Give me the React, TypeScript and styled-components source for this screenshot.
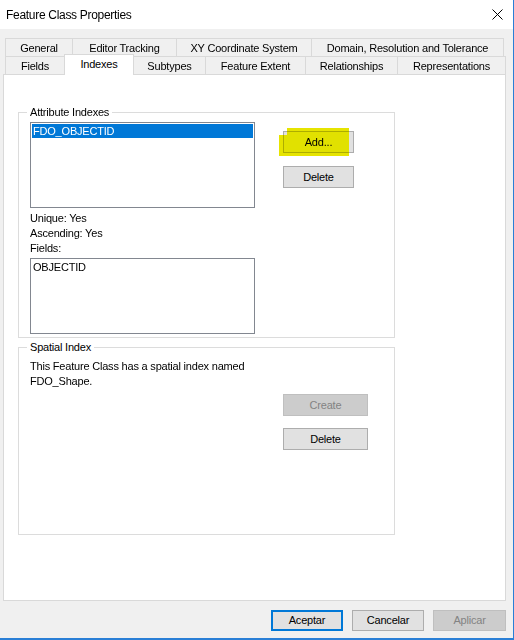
import React from "react";
import styled, { createGlobalStyle } from "styled-components";

const Global = createGlobalStyle`
  html, body { margin: 0; padding: 0; background: #f0f0f0; }
  body {
    font-family: "Liberation Sans", Arial, sans-serif;
    font-size: 11px;
    letter-spacing: -0.2px;
    color: #000;
  }
  * { box-sizing: border-box; }
`;

const Window = styled.div`
  width: 514px;
  height: 640px;
  background: #f0f0f0;
  border-right: 1px solid #2a7fd6;
  border-bottom: 2px solid #2a7fd6;
  display: flex;
  flex-direction: column;
  overflow: hidden;
`;

const TitleBar = styled.div`
  height: 29px;
  flex: none;
  background: #ffffff;
  display: flex;
  align-items: center;
  justify-content: space-between;
  padding: 0 10px 0 6px;
  font-size: 12px;
  letter-spacing: -0.3px;
`;

const CloseGlyph = styled.svg`
  width: 11px;
  height: 11px;
  display: block;
`;

const TabArea = styled.div`
  margin-top: 9px;
  padding-left: 5px;
  display: flex;
  flex-direction: column;
`;

const TabRow = styled.div`
  display: flex;
  height: 18px;
`;

const Tab = styled.div<{ $w: number; $first: boolean; $active?: boolean }>`
  width: ${(p) => p.$w + 1}px;
  margin-left: ${(p) => (p.$first ? 0 : -1)}px;
  height: ${(p) => (p.$active ? 21 : 18)}px;
  margin-top: ${(p) => (p.$active ? -2 : 0)}px;
  border: 1px solid #d9d9d9;
  border-bottom: none;
  background: ${(p) => (p.$active ? "#ffffff" : "#f0f0f0")};
  display: flex;
  justify-content: center;
  padding-top: 3px;
  line-height: 13px;
  white-space: nowrap;
  position: ${(p) => (p.$active ? "relative" : "static")};
  z-index: ${(p) => (p.$active ? 2 : 0)};
`;

const Panel = styled.div`
  margin-left: 3px;
  width: 503px;
  height: 527px;
  flex: none;
  background: #ffffff;
  border: 1px solid #d9d9d9;
  padding: 37px 0 0 14px;
  display: flex;
  flex-direction: column;
`;

const Group = styled.div<{ $h: number }>`
  position: relative;
  width: 377px;
  height: ${(p) => p.$h}px;
  border: 1px solid #dcdcdc;
  padding: 9px 0 0 11px;
  display: flex;
  flex-direction: column;
  align-items: flex-start;
  & + & { margin-top: 9px; }
`;

const GroupLabel = styled.span`
  position: absolute;
  top: -8px;
  left: 8px;
  padding: 0 3px;
  background: #ffffff;
  line-height: 15px;
`;

const ListRow = styled.div`
  display: flex;
  align-items: flex-start;
`;

const ListBox = styled.div<{ $h: number }>`
  width: 225px;
  height: ${(p) => p.$h}px;
  border: 1px solid #828790;
  padding: 1px;
  background: #ffffff;
`;

const ListItem = styled.div<{ $selected?: boolean }>`
  height: 14px;
  line-height: 14px;
  padding-left: 1px;
  background: ${(p) => (p.$selected ? "#0078d7" : "transparent")};
  color: ${(p) => (p.$selected ? "#ffffff" : "#000000")};
`;

const ButtonStack = styled.div<{ $left: number; $top: number; $gap: number }>`
  margin-left: ${(p) => p.$left}px;
  margin-top: ${(p) => p.$top}px;
  display: flex;
  flex-direction: column;
  gap: ${(p) => p.$gap}px;
`;

const Button = styled.div<{ $w: number; $h?: number; $disabled?: boolean; $default?: boolean }>`
  position: relative;
  width: ${(p) => p.$w}px;
  height: ${(p) => p.$h ?? 22}px;
  background: ${(p) => (p.$disabled ? "#cccccc" : "#e1e1e1")};
  border: ${(p) =>
    p.$default ? "2px solid #0078d7" : p.$disabled ? "1px solid #bfbfbf" : "1px solid #adadad"};
  color: ${(p) => (p.$disabled ? "#838383" : "#000000")};
  display: flex;
  align-items: center;
  justify-content: center;
  line-height: 13px;
`;

/* marker stroke laid over the Add button */
const Highlight = styled.span`
  position: absolute;
  left: -5px;
  top: -4px;
  width: 70px;
  height: 28px;
  background: #e6e400;
  mix-blend-mode: darken;
  clip-path: polygon(8px 0, 100% 0, 100% 100%, 0 100%, 0 7px, 8px 7px);
  pointer-events: none;
`;

const InfoLines = styled.div`
  margin-top: 3px;
  line-height: 15px;
`;

const FieldsList = styled(ListBox)`
  margin-top: 2px;
`;

const Paragraph = styled.div`
  margin-top: 2px;
  line-height: 15px;
`;

const Footer = styled.div`
  display: flex;
  justify-content: flex-end;
  gap: 9px;
  padding: 9px 7px 0 0;
`;

const topTabs = [
  { label: "General", w: 67 },
  { label: "Editor Tracking", w: 104 },
  { label: "XY Coordinate System", w: 135 },
  { label: "Domain, Resolution and Tolerance", w: 192 },
];

const bottomTabs = [
  { label: "Fields", w: 59 },
  { label: "Indexes", w: 69, active: true },
  { label: "Subtypes", w: 72 },
  { label: "Feature Extent", w: 100 },
  { label: "Relationships", w: 92 },
  { label: "Representations", w: 108 },
];

export default function App() {
  return (
    <>
      <Global />
      <Window>
        <TitleBar>
          <span>Feature Class Properties</span>
          <CloseGlyph viewBox="0 0 11 11">
            <path d="M0.5 0.5 L10.5 10.5 M10.5 0.5 L0.5 10.5" stroke="#000" strokeWidth="1" />
          </CloseGlyph>
        </TitleBar>

        <TabArea>
          <TabRow>
            {topTabs.map((t, i) => (
              <Tab key={t.label} $w={t.w} $first={i === 0}>
                {t.label}
              </Tab>
            ))}
          </TabRow>
          <TabRow>
            {bottomTabs.map((t, i) => (
              <Tab key={t.label} $w={t.w} $first={i === 0} $active={t.active}>
                {t.label}
              </Tab>
            ))}
          </TabRow>
        </TabArea>

        <Panel>
          <Group $h={226}>
            <GroupLabel>Attribute Indexes</GroupLabel>
            <ListRow>
              <ListBox $h={86}>
                <ListItem $selected>FDO_OBJECTID</ListItem>
              </ListBox>
              <ButtonStack $left={28} $top={9} $gap={13}>
                <Button $w={71}>
                  Add...
                  <Highlight />
                </Button>
                <Button $w={71}>Delete</Button>
              </ButtonStack>
            </ListRow>
            <InfoLines>
              <div>Unique: Yes</div>
              <div>Ascending: Yes</div>
              <div>Fields:</div>
            </InfoLines>
            <FieldsList $h={76}>
              <ListItem>OBJECTID</ListItem>
            </FieldsList>
          </Group>

          <Group $h={188}>
            <GroupLabel>Spatial Index</GroupLabel>
            <Paragraph>
              This Feature Class has a spatial index named
              <br />
              FDO_Shape.
            </Paragraph>
            <ButtonStack $left={253} $top={5} $gap={12}>
              <Button $w={85} $disabled>
                Create
              </Button>
              <Button $w={85}>Delete</Button>
            </ButtonStack>
          </Group>
        </Panel>

        <Footer>
          <Button $w={72} $h={21} $default>
            Aceptar
          </Button>
          <Button $w={72} $h={21}>
            Cancelar
          </Button>
          <Button $w={73} $h={21} $disabled>
            Aplicar
          </Button>
        </Footer>
      </Window>
    </>
  );
}
